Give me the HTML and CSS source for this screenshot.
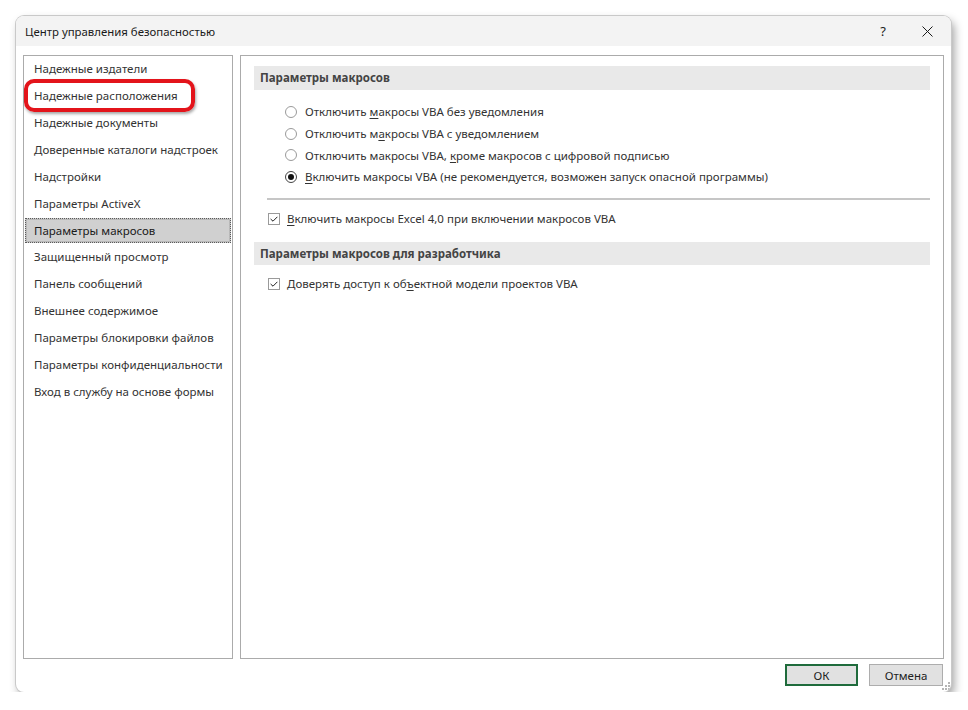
FILE: index.html
```html
<!DOCTYPE html>
<html lang="ru">
<head>
<meta charset="utf-8">
<title>Центр управления безопасностью</title>
<link rel="stylesheet" href="styles.css">
</head>
<body>
<div class="dialog">
  <div class="titlebar">
    <span class="title">Центр управления безопасностью</span>
    <span class="tb-help">?</span>
    <span class="tb-close">
      <svg width="11" height="11" viewBox="0 0 11 11"><path d="M0.5 0.5 L10.5 10.5 M10.5 0.5 L0.5 10.5" stroke="#1a1a1a" stroke-width="1" fill="none"/></svg>
    </span>
  </div>

  <div class="content">
    <ul class="nav">
      <li class="nav-item">Надежные издатели</li>
      <li class="nav-item">Надежные расположения</li>
      <li class="nav-item">Надежные документы</li>
      <li class="nav-item">Доверенные каталоги надстроек</li>
      <li class="nav-item">Надстройки</li>
      <li class="nav-item">Параметры ActiveX</li>
      <li class="nav-item selected">Параметры макросов</li>
      <li class="nav-item">Защищенный просмотр</li>
      <li class="nav-item">Панель сообщений</li>
      <li class="nav-item">Внешнее содержимое</li>
      <li class="nav-item">Параметры блокировки файлов</li>
      <li class="nav-item">Параметры конфиденциальности</li>
      <li class="nav-item">Вход в службу на основе формы</li>
    </ul>

    <div class="main">
      <div class="section-head">Параметры макросов</div>
      <div class="radio-group">
        <div class="opt"><span class="radio"></span><span>Отключить <u>м</u>акросы VBA без уведомления</span></div>
        <div class="opt"><span class="radio"></span><span>Отключить м<u>а</u>кросы VBA с уведомлением</span></div>
        <div class="opt"><span class="radio"></span><span>Отключить макросы VBA, <u>к</u>роме макросов с цифровой подписью</span></div>
        <div class="opt"><span class="radio on"></span><span><u>В</u>ключить макросы VBA (не рекомендуется, возможен запуск опасной программы)</span></div>
      </div>
      <div class="separator"></div>
      <div class="opt check-row"><span class="check"><svg width="8" height="6" viewBox="0 0 8 6"><path d="M0.6 3 L3 5.2 L7.4 0.8" stroke="#222" stroke-width="1" fill="none"/></svg></span><span><u>В</u>ключить макросы Excel 4,0 при включении макросов VBA</span></div>
      <div class="section-head second">Параметры макросов для разработчика</div>
      <div class="opt check-row"><span class="check"><svg width="8" height="6" viewBox="0 0 8 6"><path d="M0.6 3 L3 5.2 L7.4 0.8" stroke="#222" stroke-width="1" fill="none"/></svg></span><span>Доверять доступ к об<u>ъ</u>ектной модели проектов VBA</span></div>
    </div>
  </div>

  <div class="footer">
    <button class="btn btn-default">ОК</button>
    <button class="btn">Отмена</button>
    <svg class="grip" width="8" height="8" viewBox="0 0 8 8">
      <rect x="6" y="0" width="2" height="2" fill="#b5b5b5"/>
      <rect x="3" y="3" width="2" height="2" fill="#b5b5b5"/>
      <rect x="6" y="3" width="2" height="2" fill="#b5b5b5"/>
      <rect x="0" y="6" width="2" height="2" fill="#b5b5b5"/>
      <rect x="3" y="6" width="2" height="2" fill="#b5b5b5"/>
      <rect x="6" y="6" width="2" height="2" fill="#b5b5b5"/>
    </svg>
  </div>

  <div class="callout"></div>
</div>
</body>
</html>
```

FILE: styles.css
```css
*, *::before, *::after {
  box-sizing: border-box;
}

html, body {
  margin: 0;
  padding: 0;
  background: #ffffff;
}

body {
  font-family: "Segoe UI", "Noto Sans", "Open Sans", sans-serif;
  font-size: 11.5px;
  color: #262626;
}

.dialog {
  position: relative;
  margin: 16px 0 0 16px;
  width: 935px;
  height: 676px;
  background: #ffffff;
  border-radius: 8px;
  box-shadow: 0 0 0 1px #c9c9c9, 3px 5px 10px rgba(0, 0, 0, 0.38);
  display: flex;
  flex-direction: column;
  overflow: hidden;
}

/* title bar */
.titlebar {
  height: 30px;
  flex: none;
  background: #f3f3f3;
  display: flex;
  align-items: center;
  padding-left: 9px;
}

.title {
  flex: 1;
  font-size: 11.4px;
  color: #1a1a1a;
  padding-top: 1px;
}

.tb-help {
  width: 20px;
  text-align: center;
  font-size: 13px;
  color: #1a1a1a;
  margin-right: 29px;
}

.tb-close {
  width: 12px;
  display: flex;
  align-items: center;
  margin-right: 17px;
  padding-top: 1px;
}

/* two panes */
.content {
  flex: none;
  height: 613px;
  display: flex;
  gap: 7px;
  padding: 9px 7px 0 7px;
}

.nav {
  list-style: none;
  margin: 0;
  padding: 0 1px 1px 1px;
  width: 210px;
  border: 1px solid #ababab;
  background: #fff;
}

.nav-item {
  height: 25px;
  line-height: 23px;
  margin-bottom: 2px;
  padding-left: 8px;
  border: 1px solid transparent;
  white-space: nowrap;
  color: #333;
}

.nav-item.selected {
  margin-top: 1px;
  margin-bottom: 1px;
  background: #d0d0d0;
  border: 1px dotted #5a5a5a;
  outline: 1px solid #b8b8b8;
  outline-offset: -2px;
  color: #1a1a1a;
}

.main {
  flex: 1;
  border: 1px solid #ababab;
  padding: 10px 13px 0 13px;
}

.section-head {
  height: 24px;
  line-height: 23px;
  background: #e9e9e9;
  padding-left: 6px;
  font-weight: 700;
  color: #444;
}

.section-head.second {
  margin-top: 12px;
  height: 23px;
}

.radio-group {
  padding-left: 31px;
  margin-top: 11px;
}

.opt {
  height: 21.7px;
  display: flex;
  align-items: center;
  white-space: nowrap;
  color: #333;
}

.opt u {
  text-decoration-thickness: 1px;
  text-underline-offset: 2px;
}

.radio {
  width: 12px;
  height: 12px;
  border: 1px solid #9a9a9a;
  border-radius: 50%;
  margin-right: 8px;
  flex: none;
  display: flex;
  align-items: center;
  justify-content: center;
}

.radio.on {
  border-color: #444;
}

.radio.on::after {
  content: "";
  width: 6px;
  height: 6px;
  border-radius: 50%;
  background: #111;
}

.separator {
  height: 2px;
  background: #c6c6c6;
  margin: 10px 0 8px 13px;
}

.check-row {
  padding-left: 14px;
  height: 22px;
}

.section-head.second + .check-row {
  margin-top: 8px;
}

.check {
  width: 12px;
  height: 12px;
  border: 1px solid #9a9a9a;
  margin-right: 7px;
  flex: none;
  display: flex;
  align-items: center;
  justify-content: center;
}

/* bottom buttons */
.footer {
  position: relative;
  flex: 1;
  display: flex;
  justify-content: flex-end;
  align-items: flex-start;
  gap: 11px;
  padding: 5px 8px 0 0;
}

.btn {
  width: 73px;
  height: 22px;
  margin: 0;
  padding: 0;
  background: #e1e1e1;
  border: 1px solid #adadad;
  font-family: inherit;
  font-size: 11.5px;
  color: #222;
}

.btn-default {
  width: 73px;
  border: 2px solid #1f6b3c;
}

.btn + .btn {
  width: 74px;
}

.grip {
  position: absolute;
  right: 1px;
  bottom: 2px;
}

/* red annotation frame drawn over the nav list */
.callout {
  position: absolute;
  left: 8px;
  top: 63px;
  width: 171px;
  height: 33px;
  border: 4px solid #e3141b;
  border-radius: 10px;
  box-shadow: 1px 2px 3px rgba(0, 0, 0, 0.35);
  pointer-events: none;
}
```
